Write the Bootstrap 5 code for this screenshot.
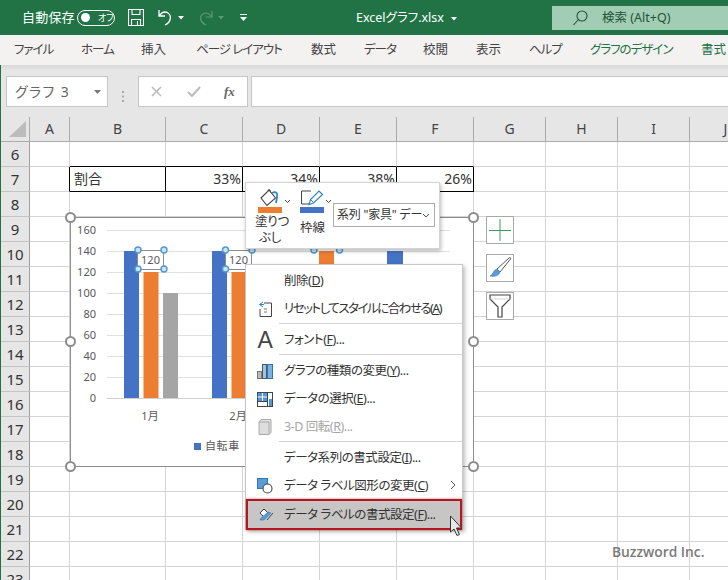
<!DOCTYPE html>
<html lang="ja"><head><meta charset="utf-8"><title>Excelグラフ</title>
<link href="https://cdn.jsdelivr.net/npm/bootstrap@5.3.0/dist/css/bootstrap.min.css" rel="stylesheet">
<style>
html,body{margin:0;background:#fff;}
body{width:728px;height:580px;overflow:hidden;font-family:"Noto Sans","Noto Sans CJK JP",sans-serif;font-feature-settings:"palt";color:#333;}
.app-frame{width:728px;height:580px;overflow:hidden;}
.title-strip{height:35px;background:#217346;color:#fff;font-size:13px;}
.auto-label{margin-left:22px;width:55px;letter-spacing:.2px;}
.pill-toggle{width:38px;height:16px;border:1.3px solid #fff;border-radius:8px;font-size:9px;line-height:1;padding-left:3px;}
.pill-dot{width:9px;height:9px;border-radius:50%;background:#fff;margin-right:8px;}
.qat-icon{display:block;}
.doc-name{position:absolute;left:356px;top:9px;font-size:12.5px;line-height:18px;}
.search-box{position:absolute;left:552px;top:6px;width:176px;height:24px;background:#a0cdb3;color:#24523a;font-size:12.5px;}
.tab-strip{height:30px;background:#f3f2f1;font-size:12.5px;color:#444;}
.tab-strip span{position:absolute;top:6px;line-height:18px;white-space:nowrap;}
.tab-strip .kana-tab{letter-spacing:-1px;}
.tab-strip .tool-tab{color:#217346;}
.formula-strip{height:52px;background:linear-gradient(#d9d9d9 0,#e6e6e6 6px);padding-top:11px;}
.name-box,.fx-box,.fx-input{height:31px;background:#fff;border:1px solid #c6c6c6;}
.name-box{margin-left:5px;width:102px;color:#666;font-size:14px;letter-spacing:1.4px;padding-left:8px;}
.grip{width:30px;}
.fx-box{width:110px;color:#bbb;}
.fx-input{margin-left:3px;width:477px;border-right:0;}
.fx-sign{font-family:"Liberation Serif",serif;font-style:italic;font-weight:700;font-size:13px;color:#666;}
.sheet-wrap{overflow:hidden;}
.sheet-grid{border-collapse:separate;border-spacing:0;table-layout:fixed;width:761px;}
.sheet-grid th,.sheet-grid td{height:25px;padding:0;border-right:1px solid #d4d4d4;border-bottom:1px solid #d4d4d4;box-sizing:border-box;}
.sheet-grid th{background:#e6e6e6;font-weight:400;text-align:center;color:#444;font-size:15px;line-height:1;border-right-color:#ababab;border-bottom-color:#c4c4c4;}
.sheet-grid thead th{font-size:14px;border-bottom-color:#ababab;}
.sheet-grid tbody th{font-size:15px;color:#333;border-right-color:#a0a0a0;}
.corner-cell{padding:0;}
.sheet-grid td.val{color:#333;font-size:14px;line-height:1;padding:0 1px 0 4px;text-align:right;}
.sheet-grid td.val.lbl{text-align:left;}
.sheet-grid .ink-b{border-bottom-color:#000;}
.sheet-grid .ink-r{border-right-color:#000;}
.left-rule{border-left:1px solid #217346;}
.chart-layer{position:absolute;left:60px;top:207px;}
.chart-layer text{font-family:"Noto Sans","Noto Sans CJK JP",sans-serif;font-size:11px;fill:#595959;}
.side-btn{position:absolute;left:486px;width:28px;height:28px;background:#fff;border:1px solid #a9a9a9;}
.mini-bar{position:absolute;left:245px;top:182px;width:195px;height:67px;background:#fff;border:1px solid #d4d4d4;box-shadow:1px 2px 4px rgba(0,0,0,.28);font-size:12.5px;color:#333;line-height:16px;padding:6px 0 0 9px;}
.mini-tool svg{display:block;}
.tool-fill{width:45px;}
.tool-fill svg{margin-left:3px;}
.tool-fill div{width:30px;text-align:center;white-space:nowrap;letter-spacing:-.2px;}
.tool-line{width:33px;}
.tool-line div{width:24px;text-align:center;padding-top:6px;white-space:nowrap;}
.mini-select{width:102px;height:24px;margin-top:14px;border:1px solid #ababab;font-size:12px;letter-spacing:-.2px;white-space:nowrap;padding-left:3px;}
.ctx-menu{position:absolute;left:245px;top:264px;width:218px;height:266px;min-width:0;margin:0;padding:2px 0 0;display:block;background:#fff;border:1px solid #c8c8c8;border-radius:0;box-shadow:2px 2px 4px rgba(0,0,0,.25);font-size:12.5px;}
.ctx-menu .dropdown-item{height:28px;padding:0;color:#333;line-height:28px;white-space:nowrap;letter-spacing:-.45px;}
.ctx-menu .dropdown-item.off{color:#a6a6a6;}
.ctx-menu .dropdown-item.squeeze{letter-spacing:-1.5px;}
.ctx-menu .dropdown-item.picked{height:31px;margin-top:-1px;background:#c8c6c4;border:2px solid #b2191e;box-shadow:0 0 2px rgba(178,25,30,.7);}
.ctx-menu hr{margin:0 0 1px 33px;height:2px;border:0;border-top:1px solid #d4d4d4;opacity:1;}
.slot{width:38px;flex:none;display:flex;justify-content:center;align-items:center;}
.slot-a{font-family:"Liberation Sans",sans-serif;font-size:23px;color:#444;}
.fly{position:absolute;left:204px;top:215px;}
.pointer-mark{position:absolute;left:449px;top:515px;z-index:1001;}
.brand-mark{position:absolute;left:612px;top:542px;font-family:"Open Sans",sans-serif;font-weight:600;font-size:13.8px;line-height:20px;color:#7a7a7a;}
</style></head>
<body>
<div class="app-frame position-relative">
  <div class="title-strip d-flex align-items-center">
    <div class="auto-label">自動保存</div>
    <div class="pill-toggle d-flex align-items-center"><span class="pill-dot"></span>オフ</div>
    <svg class="qat-icon" style="margin-left:13px" width="16" height="17" viewBox="0 0 16 17" fill="none" stroke="#fff" stroke-width="1.1"><path d="M.5.5h15v16H.5zM4 .5v5h8v-5M3.500 16.500v-6h9v6M9.500 12v4.500"/></svg>
    <svg class="qat-icon" style="margin-left:13px" width="17" height="17" viewBox="0 0 17 17" fill="none" stroke="#fff" stroke-width="1.3"><path d="M2 1v6h6M2 7c3-4 6-5 9-3 4 3 3 9-3 12"/></svg>
    <svg class="qat-icon" style="margin-left:4px" width="6" height="4" viewBox="0 0 6 4" fill="#fff"><path d="M0 0h6L3 3.500z"/></svg>
    <svg class="qat-icon" style="margin-left:13px" width="17" height="17" viewBox="0 0 17 17" fill="none" stroke="#5a9a78" stroke-width="1.2"><path d="M15 2v6H9M15 8c-3-4-6-5-9-3-4 3-3 8 3 11"/></svg>
    <svg class="qat-icon" style="margin-left:4px" width="6" height="4" viewBox="0 0 6 4" fill="#5a9a78"><path d="M0 0h6L3 3.500z"/></svg>
    <svg class="qat-icon" style="margin-left:16px" width="7" height="7" viewBox="0 0 7 7" fill="#fff"><path d="M0 0h7v1H0zM0 3h7L3.500 7z"/></svg>
    <div class="doc-name">Excelグラフ.xlsx <svg class="ms-1" width="6" height="4" viewBox="0 0 6 4" fill="#fff"><path d="M0 0h6L3 3.500z"/></svg></div>
    <div class="search-box d-flex align-items-center">
      <svg style="margin-left:21px" width="15" height="16" viewBox="0 0 15 16" fill="none" stroke="#24523a" stroke-width="1.1"><circle cx="9" cy="6" r="5"/><path d="M5.500 9.500L.5 15"/></svg>
      <span style="margin-left:14px">検索 (Alt+Q)</span>
    </div>
  </div>
  <div class="tab-strip position-relative">
    <span class="kana-tab" style="left:14px">ファイル</span><span class="kana-tab" style="left:81px">ホーム</span><span style="left:141px">挿入</span><span class="kana-tab" style="left:196px">ページ レイアウト</span><span style="left:311px">数式</span><span class="kana-tab" style="left:364px">データ</span><span style="left:423px">校閲</span><span style="left:476px">表示</span><span class="kana-tab" style="left:529px">ヘルプ</span><span class="tool-tab kana-tab" style="left:590px">グラフのデザイン</span><span class="tool-tab" style="left:701px">書式</span>
  </div>
  <div class="formula-strip d-flex left-rule">
    <div class="name-box d-flex align-items-center justify-content-between">グラフ 3<svg style="margin-right:6px" width="7" height="4" viewBox="0 0 7 4" fill="#777"><path d="M0 0h7L3.500 4z"/></svg></div>
    <div class="grip d-flex justify-content-center align-items-center"><svg width="3" height="11" viewBox="0 0 3 11" fill="#aaa"><path d="M0 0h2v2H0zM0 4.500h2v2H0zM0 9h2v2H0z"/></svg></div>
    <div class="fx-box d-flex align-items-center">
      <svg style="margin-left:12px" width="11" height="11" viewBox="0 0 11 11" stroke="#bbb" stroke-width="1.6"><path d="M1 1l9 9M10 1l-9 9"/></svg>
      <svg style="margin-left:25px" width="14" height="11" viewBox="0 0 14 11" fill="none" stroke="#bbb" stroke-width="2"><path d="M1 6l4 4 8-9"/></svg>
      <span class="fx-sign" style="margin-left:23px">fx</span>
    </div>
    <div class="fx-input"></div>
  </div>
  <div class="sheet-wrap left-rule">
  <table class="sheet-grid">
    <colgroup><col style="width:29px"><col style="width:40px"><col style="width:96px"><col style="width:77px"><col style="width:77px"><col style="width:77px"><col style="width:77px"><col style="width:72px"><col style="width:72px"><col style="width:72px"><col style="width:72px"></colgroup>
    <thead><tr><th class="corner-cell"><svg class="d-block ms-2" width="18" height="18" viewBox="0 0 18 18" fill="#bcbcbc"><path d="M17 1v16H0z"/></svg></th><th>A</th><th>B</th><th>C</th><th>D</th><th>E</th><th>F</th><th>G</th><th>H</th><th>I</th><th>J</th></tr></thead>
    <tbody>
    <tr><th>6</th><td></td><td class="ink-b"></td><td class="ink-b"></td><td class="ink-b"></td><td class="ink-b"></td><td class="ink-b"></td><td></td><td></td><td></td><td></td></tr>
    <tr><th>7</th><td class="ink-r"></td><td class="val lbl ink-b ink-r">割合</td><td class="val ink-b ink-r">33%</td><td class="val ink-b ink-r">34%</td><td class="val ink-b ink-r">38%</td><td class="val ink-b ink-r">26%</td><td></td><td></td><td></td><td></td></tr>
    <tr><th>8</th><td></td><td></td><td></td><td></td><td></td><td></td><td></td><td></td><td></td><td></td></tr>
    <tr><th>9</th><td></td><td></td><td></td><td></td><td></td><td></td><td></td><td></td><td></td><td></td></tr>
    <tr><th>10</th><td></td><td></td><td></td><td></td><td></td><td></td><td></td><td></td><td></td><td></td></tr>
    <tr><th>11</th><td></td><td></td><td></td><td></td><td></td><td></td><td></td><td></td><td></td><td></td></tr>
    <tr><th>12</th><td></td><td></td><td></td><td></td><td></td><td></td><td></td><td></td><td></td><td></td></tr>
    <tr><th>13</th><td></td><td></td><td></td><td></td><td></td><td></td><td></td><td></td><td></td><td></td></tr>
    <tr><th>14</th><td></td><td></td><td></td><td></td><td></td><td></td><td></td><td></td><td></td><td></td></tr>
    <tr><th>15</th><td></td><td></td><td></td><td></td><td></td><td></td><td></td><td></td><td></td><td></td></tr>
    <tr><th>16</th><td></td><td></td><td></td><td></td><td></td><td></td><td></td><td></td><td></td><td></td></tr>
    <tr><th>17</th><td></td><td></td><td></td><td></td><td></td><td></td><td></td><td></td><td></td><td></td></tr>
    <tr><th>18</th><td></td><td></td><td></td><td></td><td></td><td></td><td></td><td></td><td></td><td></td></tr>
    <tr><th>19</th><td></td><td></td><td></td><td></td><td></td><td></td><td></td><td></td><td></td><td></td></tr>
    <tr><th>20</th><td></td><td></td><td></td><td></td><td></td><td></td><td></td><td></td><td></td><td></td></tr>
    <tr><th>21</th><td></td><td></td><td></td><td></td><td></td><td></td><td></td><td></td><td></td><td></td></tr>
    <tr><th>22</th><td></td><td></td><td></td><td></td><td></td><td></td><td></td><td></td><td></td><td></td></tr>
    <tr><th>23</th><td></td><td></td><td></td><td></td><td></td><td></td><td></td><td></td><td></td><td></td></tr>
    </tbody>
  </table>
  </div>

  <svg class="chart-layer" width="425" height="270" viewBox="60 207 425 270">
    <rect x="70.500" y="217.500" width="403" height="249" fill="#fff" stroke="#8c8c8c"/>
    <g stroke="#e0e0e0"><path d="M107 230.500h343M107 251.500h343M107 272.500h343M107 293.500h343M107 314.500h343M107 335.500h343M107 356.500h343M107 377.500h343"/></g>
    <path d="M107 398.500h343" stroke="#d0d0d0"/>
    <g text-anchor="end"><text x="96" y="234">160</text><text x="96" y="255">140</text><text x="96" y="276">120</text><text x="96" y="297">100</text><text x="96" y="318">80</text><text x="96" y="339">60</text><text x="96" y="360">40</text><text x="96" y="381">20</text><text x="96" y="402">0</text></g>
    <rect x="124" y="251" width="15" height="147" fill="#4472c4"/><rect x="143.500" y="272" width="15" height="126" fill="#ed7d31"/><rect x="163" y="293" width="15" height="105" fill="#a5a5a5"/>
    <rect x="212" y="251" width="15" height="147" fill="#4472c4"/><rect x="231.500" y="272" width="15" height="126" fill="#ed7d31"/>
    <rect x="319" y="251" width="15" height="147" fill="#ed7d31"/><rect x="387" y="251" width="16" height="147" fill="#4472c4"/>
    <text x="150" y="420" text-anchor="middle">1月</text><text x="238" y="420" text-anchor="middle">2月</text>
    <rect x="194" y="443" width="7" height="7" fill="#4472c4"/><text x="205" y="450" letter-spacing=".6">自転車</text>
    <rect x="137.500" y="250.500" width="26" height="19" fill="#fff" stroke="#8c8c8c"/><text x="150.500" y="264" text-anchor="middle" fill="#444">120</text>
    <rect x="225.500" y="250.500" width="26" height="19" fill="#fff" stroke="#8c8c8c"/><text x="238.500" y="264" text-anchor="middle">120</text>
    <g fill="#cfe2f3" stroke="#4e9ad4" stroke-width="1.4"><circle cx="138" cy="250" r="3"/><circle cx="164" cy="250" r="3"/><circle cx="138" cy="269" r="3"/><circle cx="164" cy="269" r="3"/><circle cx="225.500" cy="250" r="3"/><circle cx="252" cy="250" r="3"/><circle cx="225.500" cy="269" r="3"/><circle cx="314" cy="250" r="3"/><circle cx="339.500" cy="250" r="3"/></g>
    <g fill="#fff" stroke="#8c8c8c" stroke-width="2"><circle cx="70.500" cy="217.500" r="4.500"/><circle cx="473.500" cy="217.500" r="4.500"/><circle cx="70.500" cy="341.500" r="4.500"/><circle cx="473.500" cy="341.500" r="4.500"/><circle cx="70.500" cy="466.500" r="4.500"/><circle cx="473.500" cy="466.500" r="4.500"/></g>
  </svg>

  <div class="side-btn d-flex align-items-center justify-content-center" style="top:216px"><svg width="22" height="22" viewBox="0 0 22 22" stroke="#3c9a5f"><path d="M11 0v22M0 11.500h22"/></svg></div>
  <div class="side-btn d-flex align-items-center justify-content-center" style="top:254px"><svg width="24" height="22" viewBox="0 0 24 22"><path d="M21 1c1-1 2 0 1.500 1L12 15l-3-3z" fill="#fff" stroke="#555"/><path d="M9 12l3 3c-1 4-6 5-10 4 3-1 3-6 7-7z" fill="#5b9bd5" stroke="#4a86c0" stroke-width=".7"/></svg></div>
  <div class="side-btn d-flex align-items-center justify-content-center" style="top:292px"><svg width="22" height="24" viewBox="0 0 22 24" fill="#fff" stroke="#444" stroke-width="1.200"><path d="M1 1h20v4l-8 8v10H9V13L1 5z"/><path d="M1.500 5h19" stroke="#ddd"/></svg></div>

  <div class="mini-bar d-flex align-items-start">
    <div class="mini-tool tool-fill">
      <svg width="36" height="25" viewBox="0 0 36 25"><path d="M3 9l8-8 6.500 8L9 16.500z" fill="#fff" stroke="#444" stroke-width="1.100"/><path d="M10 1.500c1-2 2.500-1 2.500 2" fill="none" stroke="#444"/><path d="M14 4c4-2 6 0 5 4l-1 6" fill="none" stroke="#2e86c8" stroke-width="1.800"/><rect x="0" y="18" width="24" height="6" fill="#ed7d31"/><path d="M27 11l2.500 2.500L32 11" fill="none" stroke="#444"/></svg>
      <div>塗りつ<br>ぶし</div>
    </div>
    <div class="mini-tool tool-line">
      <svg width="33" height="25" viewBox="0 0 33 25"><path d="M9 15H1.500V2H11" fill="none" stroke="#444"/><path d="M9 15.500l1.500-5L19 2l3.500 3.500-9 8.500z" fill="#fff" stroke="#2e86c8" stroke-width="1.200"/><path d="M10.500 10.500l3 3" stroke="#2e86c8"/><rect x="0" y="18" width="24" height="6" fill="#4472c4"/><path d="M26 11l2.500 2.500L31 11" fill="none" stroke="#444"/></svg>
      <div>枠線</div>
    </div>
    <div class="mini-select d-flex align-items-center justify-content-between">系列 "家具" デー<svg class="me-1" width="8" height="5" viewBox="0 0 8 5" fill="none" stroke="#444"><path d="M1 1l3 3 3-3"/></svg></div>
  </div>

  <div class="dropdown-menu show ctx-menu">
    <a class="dropdown-item d-flex"><span class="slot"></span><span>削除(<u>D</u>)</span></a>
    <a class="dropdown-item d-flex squeeze"><span class="slot"><svg width="14" height="16" viewBox="0 0 14 16" fill="none"><path d="M6 2h7.500v13.500H2V8" stroke="#444"/><path d="M5 1L1.500 3.500 5 6M2 3.500h4" stroke="#2e86c8"/><path d="M6 8h3M6 11h3" stroke="#777"/></svg></span><span>リセットしてスタイルに合わせる(<u>A</u>)</span></a>
    <hr>
    <a class="dropdown-item d-flex"><span class="slot slot-a">A</span><span>フォント(<u>F</u>)...</span></a>
    <hr>
    <a class="dropdown-item d-flex"><span class="slot"><svg width="16" height="16" viewBox="0 0 16 16"><rect x=".5" y="8.500" width="4" height="7" fill="#bbb" stroke="#777"/><rect x="5.500" y="1.500" width="4" height="14" fill="#9cc3e6" stroke="#555"/><rect x="10.500" y="1.500" width="5" height="14" fill="#7db1e0" stroke="#2e75b6"/></svg></span><span>グラフの種類の変更(<u>Y</u>)...</span></a>
    <a class="dropdown-item d-flex"><span class="slot"><svg width="16" height="15" viewBox="0 0 16 15"><rect x=".5" y=".5" width="15" height="14" fill="#fff" stroke="#444"/><path d="M1 1h10v8H1z" fill="#4e95d9"/><path d="M.5 5h10.500M5.500 1v8" stroke="#fff"/><path d="M.5 9.500h10.500M10.500.5v14" stroke="#444"/><path d="M12 7h3v7h-3z" fill="#4e95d9"/></svg></span><span>データの選択(<u>E</u>)...</span></a>
    <a class="dropdown-item d-flex off"><span class="slot"><svg width="14" height="16" viewBox="0 0 14 16" fill="#ddd" stroke="#aaa"><path d="M1 3l2-2.500h10v13l-2 2H1z"/><path d="M1 3h10v12.500" fill="none"/></svg></span><span>3-D 回転(<u>R</u>)...</span></a>
    <hr>
    <a class="dropdown-item d-flex"><span class="slot"></span><span>データ系列の書式設定(<u>I</u>)...</span></a>
    <a class="dropdown-item d-flex"><span class="slot"><svg width="16" height="16" viewBox="0 0 16 16"><rect x=".5" y=".5" width="10" height="10" fill="#5b9bd5" stroke="#2e75b6"/><circle cx="10.500" cy="10.500" r="4.500" fill="#fff" stroke="#444" stroke-width="1.100"/></svg></span><span>データ ラベル図形の変更(<u>C</u>)</span><svg class="fly" width="6" height="10" viewBox="0 0 6 10" fill="none" stroke="#555"><path d="M1 1l4 4-4 4"/></svg></a>
    <a class="dropdown-item d-flex picked"><span class="slot" style="width:36px"><svg width="15" height="15" viewBox="0 0 15 15"><path d="M1 6l4-4 4 4-4 4z" fill="#fff" stroke="#444"/><path d="M1 13l1-2 7-6 3 1-7 7z" fill="#5b9bd5" stroke="#2e75b6" stroke-width=".6"/><path d="M8 13l6-7" stroke="#444"/></svg></span><span>データ ラベルの書式設定(<u>F</u>)...</span></a>
  </div>

  <svg class="pointer-mark" width="14" height="22" viewBox="0 0 14 22"><path d="M1.500 1v16l3.500-3 3 6.500 2.500-1-3-6.500H12.500z" fill="#e8e8e8" stroke="#333"/></svg>
  <div class="brand-mark">Buzzword Inc.</div>
</div>
<script src="https://cdn.jsdelivr.net/npm/bootstrap@5.3.0/dist/js/bootstrap.bundle.min.js"></script>
</body></html>
